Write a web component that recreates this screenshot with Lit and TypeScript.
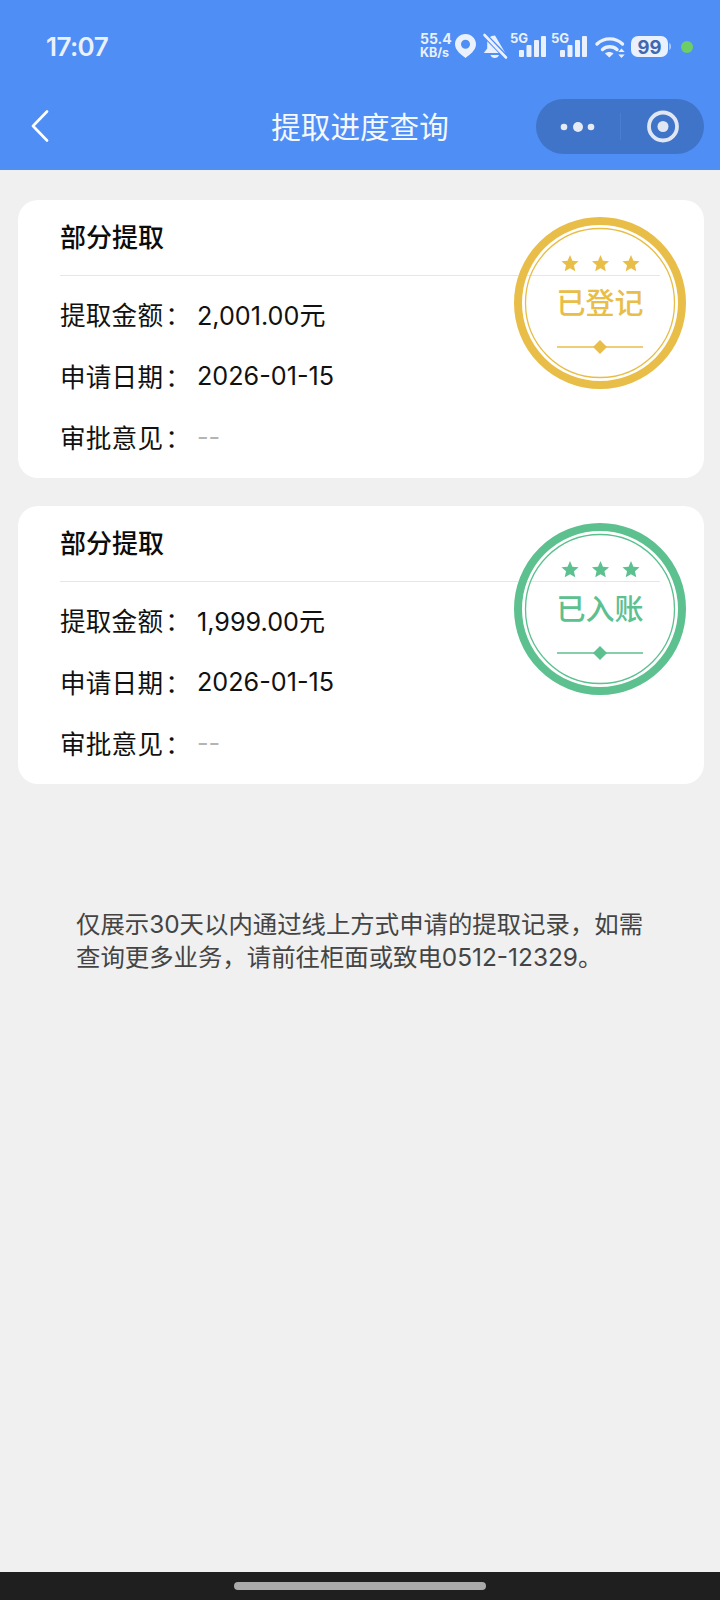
import { LitElement, html, css, svg } from "lit";
import { customElement } from "lit/decorators.js";

const star = (cx: number, cy: number, r: number) => {
  const pts: string[] = [];
  for (let i = 0; i < 10; i++) {
    const a = (-90 + i * 36) * (Math.PI / 180);
    const rad = i % 2 === 0 ? r : r * 0.46;
    pts.push(`${(cx + rad * Math.cos(a)).toFixed(2)},${(cy + rad * Math.sin(a)).toFixed(2)}`);
  }
  return svg`<polygon points=${pts.join(" ")} fill="currentColor"></polygon>`;
};

const stamp = (label: string, cls: string) => html`
  <svg class="stamp ${cls}" viewBox="0 0 172 172" width="172" height="172">
    <circle cx="86" cy="86" r="82" fill="none" stroke="currentColor" stroke-width="8"></circle>
    <circle cx="86" cy="86" r="74.500" fill="none" stroke="currentColor" stroke-width="1.300"></circle>
    ${star(56, 47, 9)}${star(86.5, 47, 9)}${star(117, 47, 9)}
    <text class="stamp-text" x="86" y="96.500" text-anchor="middle" fill="currentColor">${label}</text>
    <line x1="43" y1="130" x2="129" y2="130" stroke="currentColor" stroke-width="1.600"></line>
    <polygon points="86,123 93,130 86,137 79,130" fill="currentColor"></polygon>
  </svg>`;

const row = (k: string, v: string, unit = "", muted = false) => html`
  <div class="row">
    <span class="k">${k}<span class="colon">：</span></span>
    <span class="v ${muted ? "muted" : ""}">${v}<span class="unit">${unit}</span></span>
  </div>`;

@customElement("app-root")
export class AppRoot extends LitElement {
  static styles = css`
    :host {
      display: block;
      width: 720px;
      height: 1600px;
      background: #f0f0f0;
      font-family: "Inter", "Noto Sans CJK SC", sans-serif;
      overflow: hidden;
    }
    .page { display: flex; flex-direction: column; height: 1600px; }
    .head { background: #4f8ef5; height: 170px; flex: none; display: flex; flex-direction: column; }
    .status { height: 96px; box-sizing: border-box; display: flex; align-items: center; padding: 0 25px 2px 46px; color: #eaf1fd; }
    .time { font: 600 26px/1 "Inter", sans-serif; letter-spacing: -0.6px; flex: 1; }
    .icons { display: block; flex: none; }
    .nav { height: 56px; display: grid; grid-template-columns: 1fr auto 1fr; align-items: center; padding: 0 16px; margin-top: 2px; }
    .back { display: block; margin-left: 15px; }
    .title { text-align: center; color: #f4f8ff; font: 400 29.6px/1 "Noto Sans CJK SC", sans-serif; }
    .capsule { display: block; justify-self: end; }
    .list { display: flex; flex-direction: column; gap: 28px; padding: 30px 16px 0 18px; }
    .card { position: relative; background: #fff; border-radius: 20px; height: 278px; padding: 0 44px 0 42px; box-sizing: border-box; }
    .card-title { height: 75px; border-bottom: 1px solid #e6e6e6; font: 500 26px/72px "Noto Sans CJK SC", sans-serif; color: #0c0c0c; }
    .rows { display: flex; flex-direction: column; padding-top: 7px; }
    .row { height: 61.5px; display: flex; align-items: center; color: #111; }
    .k { width: 138px; flex: none; font-family: "Noto Sans CJK SC", sans-serif; font-size: 25.6px; letter-spacing: 0.2px; }
    .colon { margin-left: 2px; }
    .v { font-size: 25.2px; font-weight: 400; margin-left: -1px; }
    .unit { font-size: 26px; }
    .muted { color: #b4b4b4; }
    .stamp { position: absolute; left: 496px; top: 17px; }
    .gold { color: #e8bd48; }
    .green { color: #5cc08f; }
    .stamp-text { font: 500 29px "Noto Sans CJK SC", sans-serif; }
    .note { margin: 124px 0 0 76px; width: 580px; font-size: 24.4px; line-height: 33px; color: #444; }
    .spacer { flex: 1; }
    .home { flex: none; height: 28px; background: #1f1f1f; display: flex; justify-content: center; align-items: center; }
    .pill { width: 252px; height: 8px; border-radius: 4px; background: #aaaaaa; }
  `;

  render() {
    return html`<div class="page">
      <div class="head">
        <div class="status">
          <div class="time">17:07</div>
          <svg class="icons" width="275" height="34" viewBox="0 0 275 34" fill="currentColor">
            <g font-family="Inter, sans-serif" font-weight="700" fill="currentColor">
              <text x="0" y="14" font-size="14">55.4</text>
              <text x="0" y="27" font-size="12.500">KB/s</text>
              <text x="90" y="13" font-size="13">5G</text>
              <text x="131" y="13" font-size="13">5G</text>
            </g>
            <path fill-rule="evenodd" d="M45.500 4c-5.800 0-10.500 4.600-10.500 10.300 0 6.300 6.800 10.800 10.500 13.700 3.700-2.900 10.500-7.400 10.500-13.700C56 8.600 51.300 4 45.500 4zm0 5.800a4.500 4.500 0 1 1 0 9 4.500 4.500 0 0 1 0-9z"></path>
            <path d="M75 5.500c-4.800 0-7.800 3.400-7.800 7.800v5.200l-3.400 4.500h21.500L75 5.500z M70.500 25h8.500c-.6 2-2.300 3-4.300 3s-3.600-1-4.200-3z"></path>
            <path d="M65.500 6 L86 27" stroke="#4f8ef5" stroke-width="5" fill="none"></path>
            <path d="M64.500 5 L86 27.500" stroke="currentColor" stroke-width="2.600" stroke-linecap="round" fill="none"></path>
            <rect x="99" y="20" width="5" height="7" rx="1"></rect>
            <rect x="106.500" y="15" width="5" height="12" rx="1"></rect>
            <rect x="114" y="10" width="5" height="17" rx="1"></rect>
            <rect x="121" y="6" width="5" height="21" rx="1"></rect>
            <rect x="140" y="20" width="5" height="7" rx="1"></rect>
            <rect x="147.500" y="15" width="5" height="12" rx="1"></rect>
            <rect x="155" y="10" width="5" height="17" rx="1"></rect>
            <rect x="162" y="6" width="5" height="21" rx="1"></rect>
            <g fill="none" stroke="currentColor" stroke-width="3.400" stroke-linecap="round">
              <path d="M177 14c7-6.800 18.500-6.800 25.500 0"></path>
              <path d="M182.500 19.500c4-3.700 10.500-3.700 14.500 0"></path>
            </g>
            <path d="M185 23.500c2.400-2 6-2 8.500 0l-4.200 4z"></path>
            <path d="M201.500 18.500l3.200 3.500h-6.400z M201.500 28l3.200-3.500h-6.400z"></path>
            <rect x="211" y="6" width="37" height="21" rx="7"></rect>
            <path d="M249.500 13c1.500.5 1.500 6.500 0 7z"></path>
            <text x="229.500" y="23.500" text-anchor="middle" font-family="Inter, sans-serif" font-weight="700" font-size="18.500" fill="#3f68b0">99</text>
            <circle cx="267" cy="17" r="6" fill="#6ccf66"></circle>
          </svg>
        </div>
        <div class="nav">
          <svg class="back" width="18" height="32" viewBox="0 0 18 32"><path d="M16 1.500 L2 16 L16 30.500" fill="none" stroke="#fff" stroke-width="2.600" stroke-linecap="round" stroke-linejoin="round"></path></svg>
          <div class="title">提取进度查询</div>
          <svg class="capsule" width="168" height="55" viewBox="0 0 168 55">
            <rect width="168" height="55" rx="27.500" fill="#3f74c9"></rect>
            <rect x="84" y="14" width="1" height="27" fill="#4a7ed0"></rect>
            <circle cx="28" cy="28" r="3.300" fill="#e6ebf3"></circle>
            <circle cx="42" cy="28" r="5" fill="#e6ebf3"></circle>
            <circle cx="55" cy="28" r="3.300" fill="#e6ebf3"></circle>
            <circle cx="127" cy="27.500" r="14" fill="none" stroke="#e0e7f2" stroke-width="3.800"></circle>
            <circle cx="127" cy="27.500" r="5.500" fill="#e0e7f2"></circle>
          </svg>
        </div>
      </div>
      <div class="list">
        <div class="card">
          <div class="card-title">部分提取</div>
          <div class="rows">
            ${row("提取金额", "2,001.00", "元")}
            ${row("申请日期", "2026-01-15")}
            ${row("审批意见", "--", "", true)}
          </div>
          ${stamp("已登记", "gold")}
        </div>
        <div class="card">
          <div class="card-title">部分提取</div>
          <div class="rows">
            ${row("提取金额", "1,999.00", "元")}
            ${row("申请日期", "2026-01-15")}
            ${row("审批意见", "--", "", true)}
          </div>
          ${stamp("已入账", "green")}
        </div>
      </div>
      <div class="note">仅展示30天以内通过线上方式申请的提取记录，如需查询更多业务，请前往柜面或致电0512-12329。</div>
      <div class="spacer"></div>
      <div class="home"><div class="pill"></div></div>
    </div>`;
  }
}
